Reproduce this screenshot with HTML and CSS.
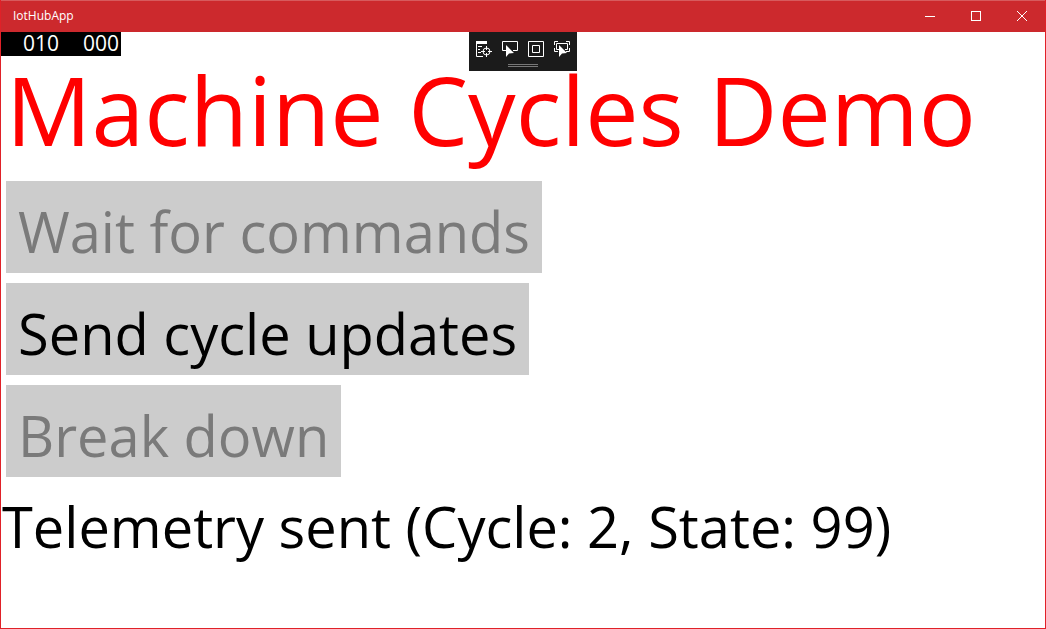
FILE: index.html
```html
<!DOCTYPE html>
<html lang="en">
<head>
<meta charset="utf-8">
<title>IotHubApp</title>
<link rel="stylesheet" href="styles.css">
</head>
<body>
<div class="window">
  <header class="titlebar">
    <span class="app-name">IotHubApp</span>
    <div class="window-controls">
      <button class="caption-button" aria-label="Minimize"><svg width="10" height="10" shape-rendering="crispEdges"><path d="M0 5.5h10"/></svg></button>
      <button class="caption-button" aria-label="Maximize"><svg width="10" height="10" shape-rendering="crispEdges"><path d="M.5.5h9v9h-9z"/></svg></button>
      <button class="caption-button" aria-label="Close"><svg width="10" height="10"><path d="M0 0l10 10M10 0L0 10"/></svg></button>
    </div>
  </header>
  <main class="content">
    <div class="frame-counter"><span>010</span><span>000</span></div>
    <div class="debug-toolbar">
      <div class="debug-icons">
        <button class="debug-button" aria-label="Go to live visual tree"><svg width="16" height="16"><path class="solid" d="M0 0h11v3H0z"/><path d="M.5 3v12.500H7M2 5.500h4M2 8.500h2M2 11.500h3M10.500 5v4M10.500 12v4M5 10.500h4M12 10.500h4"/><circle cx="10.500" cy="10.500" r="3.500"/></svg></button>
        <button class="debug-button" aria-label="Enable selection"><svg width="16" height="16"><path d="M4 9.500H.5v-9h15v9H11"/><path class="solid" d="M4 4v12l3-3.500 5-.5z"/></svg></button>
        <button class="debug-button" aria-label="Display layout adorners"><svg width="16" height="16"><path d="M.5.5h15v15H.5zM4.500 4.500h7v7h-7z"/></svg></button>
        <button class="debug-button" aria-label="Track focused element"><svg width="16" height="16"><path d="M.5 4V.5H4M12 .5h3.500V4M.5 7v3.500H4M15.500 7v3.500H12M5 8.500H2.500v-6h11v6H11"/><path class="solid" d="M5 4v12l3-3.500 5-.5z"/></svg></button>
      </div>
      <div class="grip"></div>
    </div>
    <h1 class="title">Machine Cycles Demo</h1>
    <div class="actions">
      <button class="action" disabled>Wait for commands</button>
      <button class="action">Send cycle updates</button>
      <button class="action" disabled>Break down</button>
    </div>
    <p class="status">Telemetry sent (Cycle: 2, State: 99)</p>
  </main>
</div>
</body>
</html>
```
FILE: styles.css
```css
* { box-sizing: border-box; }
body {
  margin: 0;
  background: #fff;
  color: #000;
  font-family: "Segoe UI", "Open Sans", "Noto Sans", sans-serif;
}
button {
  margin: 0;
  border: 0;
  font-family: inherit;
}
svg {
  display: block;
  fill: none;
  stroke: #fff;
}
.solid { fill: #fff; stroke: none; }
.window {
  display: flex;
  flex-direction: column;
  min-height: 100vh;
  border: 1px solid #e02128;
  border-top: 0;
}
.titlebar {
  display: flex;
  justify-content: space-between;
  height: 32px;
  padding-left: 12px;
  background: #cc292d;
  border-top: 1px solid #d75a5d;
  color: #fff;
}
.app-name { font-size: 12px; line-height: 30px; }
.window-controls { display: flex; }
.caption-button {
  display: grid;
  place-items: center;
  width: 46px;
  padding: 0 0 2px;
  background: transparent;
}
.content { position: relative; flex: 1; }
.frame-counter {
  display: flex;
  justify-content: space-between;
  width: 120px;
  height: 24px;
  padding: 0 2px 0 22px;
  background: #000;
  color: #fff;
  font-size: 21px;
  line-height: 22px;
}
.debug-toolbar {
  position: absolute;
  top: 0;
  left: 50%;
  transform: translateX(-50%);
  width: 108px;
  height: 39px;
  padding-top: 9px;
  background: #1b1b1b;
}
.debug-icons { display: flex; justify-content: center; gap: 10px; }
.debug-button { padding: 0; background: transparent; }
.grip {
  width: 30px;
  height: 3px;
  margin: 7px auto 0;
  border: solid #777;
  border-width: 1px 0;
}
.title {
  margin: 0;
  padding: 0 0 14px 5px;
  color: #f00;
  font-size: 95px;
  font-weight: 400;
  line-height: 106px;
  white-space: nowrap;
}
.actions {
  display: flex;
  flex-direction: column;
  align-items: flex-start;
  gap: 10px;
  padding: 5px;
}
.action {
  height: 92px;
  padding: 7px 12px 0;
  background: #ccc;
  color: #000;
  font-size: 56px;
  line-height: 84px;
  white-space: nowrap;
}
.action:disabled { color: #7a7a7a; }
.status {
  margin: 0;
  padding-left: 1px;
  font-size: 56px;
  line-height: 88px;
  white-space: nowrap;
}
```
